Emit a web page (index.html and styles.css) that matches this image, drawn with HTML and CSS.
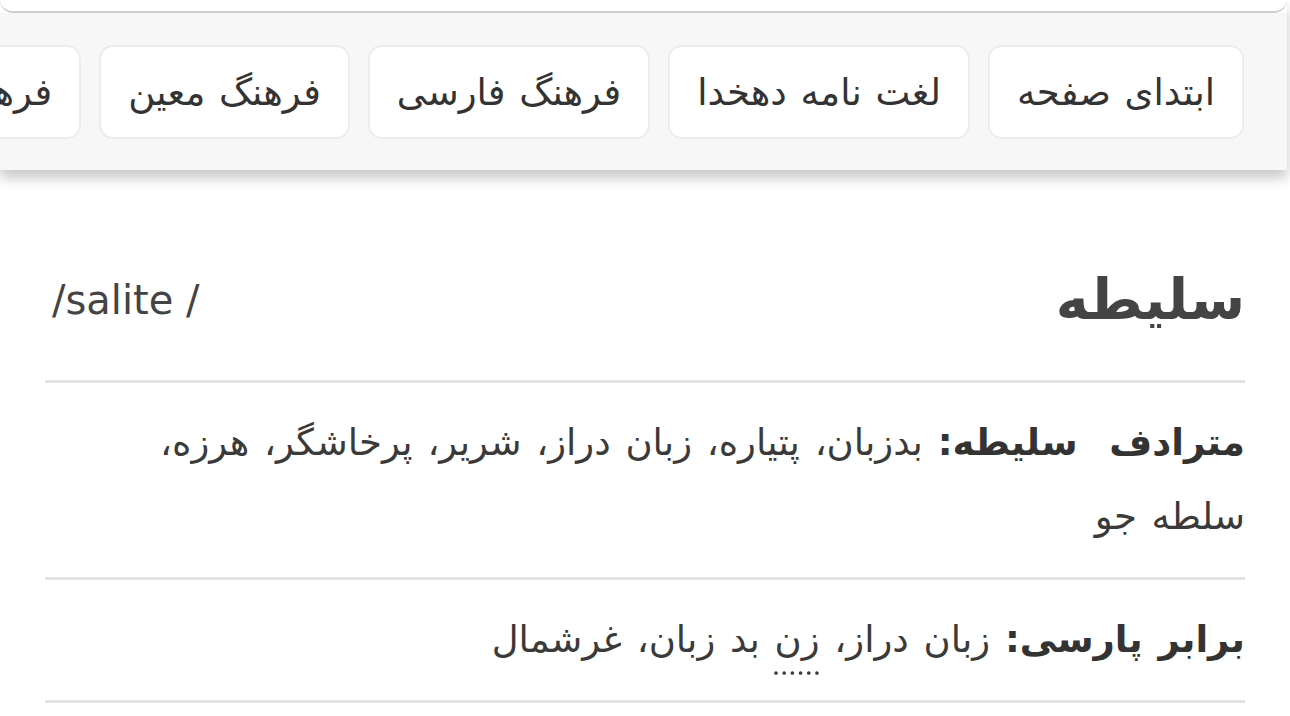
FILE: index.html
```html
<!DOCTYPE html>
<html lang="fa" dir="rtl">
<head>
  <meta charset="utf-8">
  <link rel="stylesheet" href="styles.css">
</head>
<body>
  <div class="topbar">
    <div class="search-strip"></div>
    <nav class="nav">
      <a href="#" class="nav-link">ابتدای صفحه</a>
      <a href="#" class="nav-link">لغت نامه دهخدا</a>
      <a href="#" class="nav-link">فرهنگ فارسی</a>
      <a href="#" class="nav-link">فرهنگ معین</a>
      <a href="#" class="nav-link">فرهنگ عمید</a>
      <a href="#" class="nav-link">فرهنگ مترادف</a>
    </nav>
  </div>

  <main class="entry">
    <div class="entry-head">
      <h1 class="word">سلیطه</h1>
      <span class="phonetic">/salite /</span>
    </div>

    <div class="entry-row">
      <b class="label">مترادف&nbsp; سلیطه:</b> بدزبان، پتیاره، زبان دراز، شریر، پرخاشگر، هرزه، <span class="nowrap">سلطه جو</span>
    </div>

    <div class="entry-row">
      <b class="label">برابر پارسی:</b> زبان دراز، <a href="#" class="ref">زن</a> بد زبان، غرشمال
    </div>
  </main>
</body>
</html>
```

FILE: styles.css
```css
* {
  box-sizing: border-box;
}

body {
  margin: 0;
  background: #fff;
  color: #3a3a3a;
  font-family: "DejaVu Sans", sans-serif;
  overflow-x: hidden;
}

.topbar {
  margin-right: 3px;
  box-shadow: 0 8px 12px rgba(0, 0, 0, 0.22);
}

.search-strip {
  height: 13px;
  background: #fff;
  border-bottom: 2px solid #cfcfcf;
  border-radius: 0 0 14px 14px;
}

.nav {
  display: flex;
  gap: 18px;
  padding: 32px 43px 31px 0;
  background: #f7f7f7;
  overflow: hidden;
}

.nav-link {
  flex-shrink: 0;
  display: flex;
  align-items: center;
  height: 94px;
  padding: 0 27px;
  background: #fff;
  border: 2px solid #ededed;
  border-radius: 14px;
  color: #333;
  font-size: 37px;
  word-spacing: 2px;
  text-decoration: none;
  white-space: nowrap;
}

.entry {
  padding: 0 45px;
}

.entry-head {
  display: flex;
  justify-content: space-between;
  align-items: center;
  padding: 90px 0 40px;
  border-bottom: 3px solid #e3e3e3;
}

.word {
  margin: 0;
  font-size: 56px;
  line-height: 80px;
  color: #444;
}

.phonetic {
  direction: ltr;
  padding-left: 7px;
  font-size: 40px;
  color: #444;
}

.entry-row {
  padding: 23px 0;
  border-bottom: 3px solid #e3e3e3;
  font-size: 37px;
  line-height: 74px;
  word-spacing: 3px;
  color: #3a3a3a;
}

.label {
  color: #333;
}

.nowrap {
  white-space: nowrap;
}

.ref {
  color: inherit;
  text-decoration: underline dotted;
  text-underline-offset: 20px;
}
```
